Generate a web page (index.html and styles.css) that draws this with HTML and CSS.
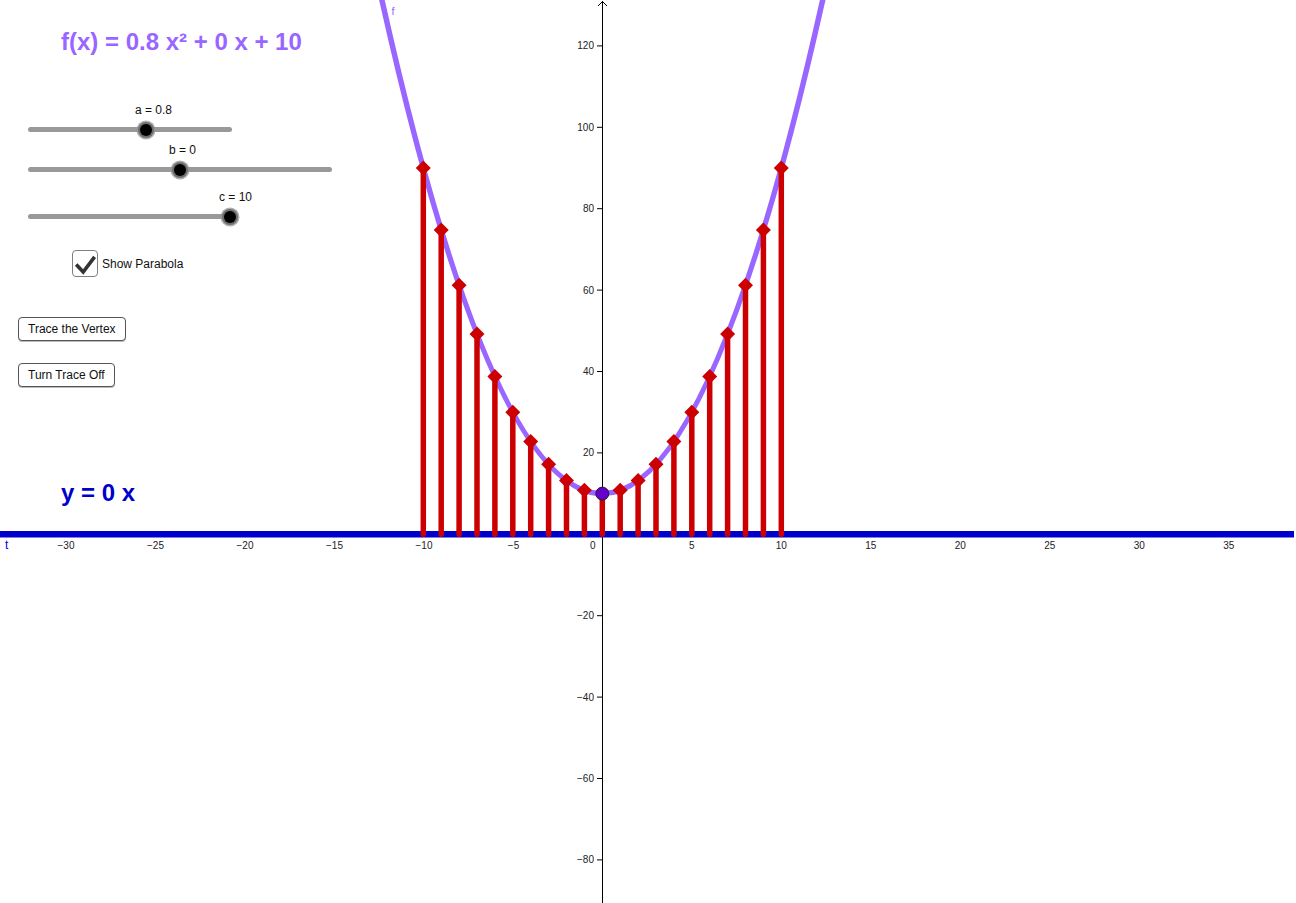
FILE: index.html
```html
<!DOCTYPE html>
<html lang="en">
<head>
<meta charset="utf-8">
<title>Parabola applet</title>
<link rel="stylesheet" href="styles.css">
</head>
<body>
<div class="applet">
  <svg class="graph" width="1296" height="903" viewBox="0 0 1296 903" xmlns="http://www.w3.org/2000/svg">
    <!-- y axis -->
    <line class="axis" x1="602.5" y1="1" x2="602.5" y2="903"/>
    <polyline class="axis" points="598,6 602.5,1.5 607,6"/>
    <path class="axis" d="M597 45.9H602.5M597 127.3H602.5M597 208.7H602.5M597 290.1H602.5M597 371.5H602.5M597 452.9H602.5M597 615.7H602.5M597 697.1H602.5M597 778.5H602.5M597 859.9H602.5"/>
    <g class="ylabels">
      <text x="594" y="49.4">120</text>
      <text x="594" y="130.8">100</text>
      <text x="594" y="212.2">80</text>
      <text x="594" y="293.6">60</text>
      <text x="594" y="375">40</text>
      <text x="594" y="456.4">20</text>
      <text x="594" y="619.2">−20</text>
      <text x="594" y="700.6">−40</text>
      <text x="594" y="782">−60</text>
      <text x="594" y="863.4">−80</text>
    </g>
    <g class="xlabels">
      <text x="66" y="548.5">−30</text>
      <text x="155.5" y="548.5">−25</text>
      <text x="245" y="548.5">−20</text>
      <text x="334.5" y="548.5">−15</text>
      <text x="424" y="548.5">−10</text>
      <text x="513.5" y="548.5">−5</text>
      <text x="691.8" y="548.5">5</text>
      <text x="781.3" y="548.5">10</text>
      <text x="870.8" y="548.5">15</text>
      <text x="960.3" y="548.5">20</text>
      <text x="1049.8" y="548.5">25</text>
      <text x="1139.3" y="548.5">30</text>
      <text x="1228.8" y="548.5">35</text>
    </g>
    <text class="zero-label" x="595.5" y="548.5">0</text>

    <!-- line y = 0x -->
    <line class="blue-line" x1="0" y1="534.3" x2="1294" y2="534.3"/>
    <text class="t-label" x="5" y="549">t</text>

    <!-- parabola -->
    <path class="parabola" d="M369.6 -56.7Q602.3 1043.9 835 -56.7"/>
    <text class="f-label" x="391.5" y="15">f</text>

    <!-- stems -->
    <path class="stems" d="M423.3 534.3V168M441.2 534.3V229.9M459.1 534.3V285.2M477 534.3V334.1M494.9 534.3V376.4M512.8 534.3V412.2M530.7 534.3V441.5M548.6 534.3V464.3M566.5 534.3V480.6M584.4 534.3V490.3M602.3 534.3V493.6M620.2 534.3V490.3M638.1 534.3V480.6M656 534.3V464.3M673.9 534.3V441.5M691.8 534.3V412.2M709.7 534.3V376.4M727.6 534.3V334.1M745.5 534.3V285.2M763.4 534.3V229.9M781.3 534.3V168"/>
    <path class="diamonds" d="M423.3 160.5l7.5 7.5l-7.5 7.5l-7.5-7.5zM441.2 222.4l7.5 7.5l-7.5 7.5l-7.5-7.5zM459.1 277.7l7.5 7.5l-7.5 7.5l-7.5-7.5zM477 326.6l7.5 7.5l-7.5 7.5l-7.5-7.5zM494.9 368.9l7.5 7.5l-7.5 7.5l-7.5-7.5zM512.8 404.7l7.5 7.5l-7.5 7.5l-7.5-7.5zM530.7 434l7.5 7.5l-7.5 7.5l-7.5-7.5zM548.6 456.8l7.5 7.5l-7.5 7.5l-7.5-7.5zM566.5 473.1l7.5 7.5l-7.5 7.5l-7.5-7.5zM584.4 482.8l7.5 7.5l-7.5 7.5l-7.5-7.5zM620.2 482.8l7.5 7.5l-7.5 7.5l-7.5-7.5zM638.1 473.1l7.5 7.5l-7.5 7.5l-7.5-7.5zM656 456.8l7.5 7.5l-7.5 7.5l-7.5-7.5zM673.9 434l7.5 7.5l-7.5 7.5l-7.5-7.5zM691.8 404.7l7.5 7.5l-7.5 7.5l-7.5-7.5zM709.7 368.9l7.5 7.5l-7.5 7.5l-7.5-7.5zM727.6 326.6l7.5 7.5l-7.5 7.5l-7.5-7.5zM745.5 277.7l7.5 7.5l-7.5 7.5l-7.5-7.5zM763.4 222.4l7.5 7.5l-7.5 7.5l-7.5-7.5zM781.3 160.5l7.5 7.5l-7.5 7.5l-7.5-7.5z"/>
    <!-- vertex -->
    <circle class="vertex" cx="602.3" cy="493.6" r="6.5"/>

    <!-- canvas texts -->
    <text class="title" x="61" y="50">f(x) = 0.8 x² + 0 x + 10</text>
    <text class="line-eq" x="61" y="501">y = 0 x</text>
  </svg>

  <div class="controls">
    <div class="slider slider-a">
      <div class="slider-label">a = 0.8</div>
      <div class="track"><span class="knob" style="left: 57.7%"></span></div>
    </div>
    <div class="slider slider-b">
      <div class="slider-label">b = 0</div>
      <div class="track"><span class="knob" style="left: 50%"></span></div>
    </div>
    <div class="slider slider-c">
      <div class="slider-label">c = 10</div>
      <div class="track"><span class="knob" style="left: 100%"></span></div>
    </div>

    <label class="check-row">
      <span class="checkbox">
        <svg width="24" height="24" viewBox="0 0 24 24"><path d="M3.2 12.6L10.2 20L21.6 4.8" fill="none" stroke="#333" stroke-width="3.6" stroke-linejoin="miter" stroke-linecap="butt"/></svg>
      </span>
      <span class="check-text">Show Parabola</span>
    </label>

    <button class="btn btn-trace" type="button">Trace the Vertex</button>
    <button class="btn btn-off" type="button">Turn Trace Off</button>
  </div>
</div>
</body>
</html>
```
FILE: styles.css
```css
html, body {
  margin: 0;
  padding: 0;
  background: #ffffff;
  overflow: hidden;
}

.applet {
  position: relative;
  width: 1296px;
  height: 903px;
  font-family: "Liberation Sans", Arial, sans-serif;
}

.graph {
  position: absolute;
  left: 0;
  top: 0;
  display: block;
}

.axis {
  stroke: #000;
  stroke-width: 1;
  fill: none;
}

.ylabels text {
  font: 10px "Liberation Sans", Arial, sans-serif;
  fill: #222;
  text-anchor: end;
}

.xlabels text {
  font: 10px "Liberation Sans", Arial, sans-serif;
  fill: #222;
  text-anchor: middle;
}

.zero-label {
  font: 10px "Liberation Sans", Arial, sans-serif;
  fill: #222;
  text-anchor: end;
}

.blue-line {
  stroke: #0000cc;
  stroke-width: 6.5;
}

.t-label {
  font: 12px "Liberation Sans", Arial, sans-serif;
  fill: #0000cc;
}

.parabola {
  fill: none;
  stroke: #9966ff;
  stroke-width: 5.5;
}

.f-label {
  font: 11px "Liberation Sans", Arial, sans-serif;
  fill: #9966ff;
}

.stems {
  fill: none;
  stroke: #cc0000;
  stroke-width: 5.5;
  stroke-linecap: round;
}

.diamonds {
  fill: #cc0000;
  stroke: none;
}

.vertex {
  fill: #6600cc;
  stroke: #222;
  stroke-width: 1;
}

.title {
  font: bold 24px "Liberation Sans", Arial, sans-serif;
  fill: #9966ff;
}

.line-eq {
  font: bold 24px "Liberation Sans", Arial, sans-serif;
  fill: #0000cc;
}

/* controls overlay */
.controls {
  position: absolute;
  left: 0;
  top: 0;
  width: 340px;
  padding-top: 103px;
  display: flex;
  flex-direction: column;
  align-items: flex-start;
  color: #111;
  font-size: 12px;
}

.slider {
  margin-left: 28px;
  display: flex;
  flex-direction: column;
  gap: 10px;
}

.slider-label {
  line-height: 14px;
  white-space: nowrap;
}

.track {
  position: relative;
  height: 5px;
  border-radius: 3px;
  background: #999999;
}

.knob {
  position: absolute;
  top: 50%;
  width: 12px;
  height: 12px;
  border-radius: 50%;
  background: #000;
  box-shadow: 0 0 0 2px #6e6e6e, 0 0 0 3.5px rgba(150, 150, 150, 0.75);
  transform: translate(-50%, -50%);
}

.slider-a .track { width: 204px; }
.slider-a .slider-label { margin-left: 107px; }

.slider-b { margin-top: 11px; }
.slider-b .track { width: 304px; }
.slider-b .slider-label { margin-left: 141px; }

.slider-c { margin-top: 18px; }
.slider-c .track { width: 202px; }
.slider-c .slider-label { margin-left: 191px; }

.check-row {
  margin-top: 31px;
  margin-left: 72px;
  display: flex;
  align-items: center;
  gap: 4px;
}

.checkbox {
  box-sizing: border-box;
  width: 26px;
  height: 27px;
  border: 1.5px solid #808080;
  border-radius: 4px;
  background: #fff;
  display: flex;
  align-items: center;
  justify-content: center;
}

.checkbox svg {
  display: block;
}

.check-text {
  line-height: 14px;
}

.btn {
  box-sizing: border-box;
  margin-left: 18px;
  height: 24px;
  padding: 0 9px;
  border: 1px solid #555;
  border-radius: 4px;
  background: #fff;
  color: #111;
  font: 12px "Liberation Sans", Arial, sans-serif;
  line-height: 22px;
  box-shadow: 0 1px 0 #bbb;
}

.btn-trace { margin-top: 40px; }
.btn-off { margin-top: 22px; }
```
